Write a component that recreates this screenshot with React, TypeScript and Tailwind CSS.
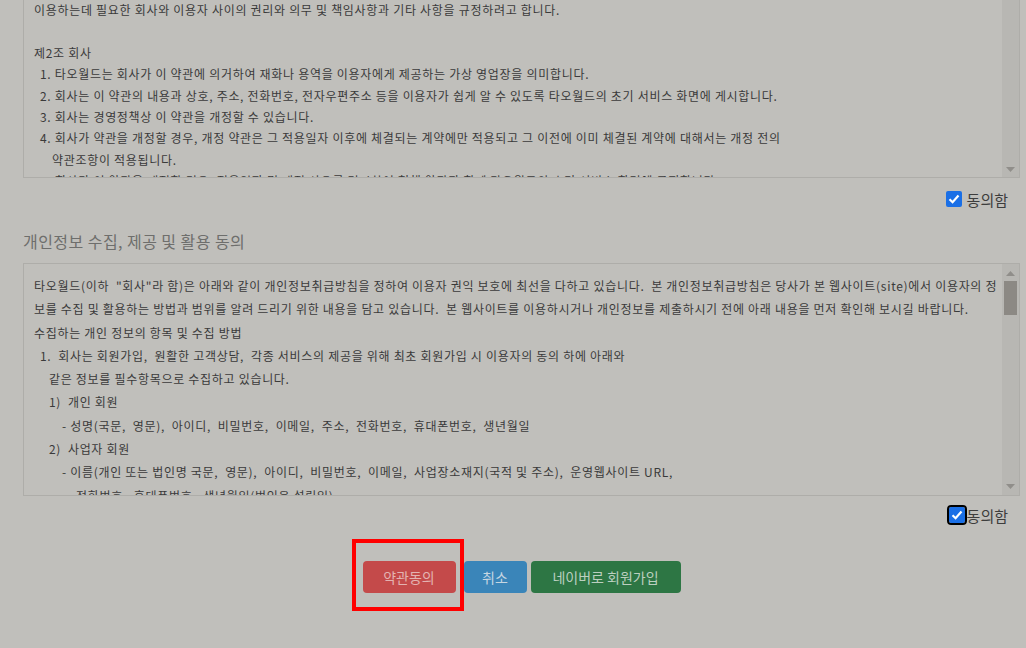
import React from "react";

const font = { fontFamily: '"Noto Sans CJK KR", "Noto Sans", sans-serif' };

const terms: { text: string; indent: string }[] = [
  { text: "이용하는데 필요한 회사와 이용자 사이의 권리와 의무 및 책임사항과 기타 사항을 규정하려고 합니다.", indent: "pl-0" },
  { text: "\u00a0", indent: "pl-0" },
  { text: "제2조 회사", indent: "pl-0" },
  { text: "1. 타오월드는 회사가 이 약관에 의거하여 재화나 용역을 이용자에게 제공하는 가상 영업장을 의미합니다.", indent: "pl-[6px]" },
  { text: "2. 회사는 이 약관의 내용과 상호, 주소, 전화번호, 전자우편주소 등을 이용자가 쉽게 알 수 있도록 타오월드의 초기 서비스 화면에 게시합니다.", indent: "pl-[6px]" },
  { text: "3. 회사는 경영정책상 이 약관을 개정할 수 있습니다.", indent: "pl-[6px]" },
  { text: "4. 회사가 약관을 개정할 경우, 개정 약관은 그 적용일자 이후에 체결되는 계약에만 적용되고 그 이전에 이미 체결된 계약에 대해서는 개정 전의", indent: "pl-[6px]" },
  { text: "약관조항이 적용됩니다.", indent: "pl-[18px]" },
  { text: "5. 회사가 이 약관을 개정할 경우, 적용일자 및 개정 사유를 명시하여 현행 약관과 함께 타오월드의 초기 서비스 화면에 공지합니다.", indent: "pl-[6px]" },
];

const privacy: { text: string; indent: string }[] = [
  { text: "타오월드(이하 \u00a0\"회사\"라 함)은 아래와 같이 개인정보취급방침을 정하여 이용자 권익 보호에 최선을 다하고 있습니다. \u00a0본 개인정보취급방침은 당사가 본 웹사이트(site)에서 이용자의 정", indent: "pl-0" },
  { text: "보를 수집 및 활용하는 방법과 범위를 알려 드리기 위한 내용을 담고 있습니다. \u00a0본 웹사이트를 이용하시거나 개인정보를 제출하시기 전에 아래 내용을 먼저 확인해 보시길 바랍니다.", indent: "pl-0" },
  { text: "수집하는 개인 정보의 항목 및 수집 방법", indent: "pl-0" },
  { text: "1. \u00a0회사는 회원가입, \u00a0원활한 고객상담, \u00a0각종 서비스의 제공을 위해 최초 회원가입 시 이용자의 동의 하에 아래와", indent: "pl-[6px]" },
  { text: "같은 정보를 필수항목으로 수집하고 있습니다.", indent: "pl-[15px]" },
  { text: "1) \u00a0개인 회원", indent: "pl-[15px]" },
  { text: "- 성명(국문, \u00a0영문), \u00a0아이디, \u00a0비밀번호, \u00a0이메일, \u00a0주소, \u00a0전화번호, \u00a0휴대폰번호, \u00a0생년월일", indent: "pl-[28px]" },
  { text: "2) \u00a0사업자 회원", indent: "pl-[15px]" },
  { text: "- 이름(개인 또는 법인명 국문, \u00a0영문), \u00a0아이디, \u00a0비밀번호, \u00a0이메일, \u00a0사업장소재지(국적 및 주소), \u00a0운영웹사이트 URL,", indent: "pl-[28px]" },
  { text: "전화번호, \u00a0휴대폰번호, \u00a0생년월일(법인은 설립일)", indent: "pl-[42px]" },
];

function Arrow({ up }: { up?: boolean }) {
  return (
    <svg width="9" height="5" viewBox="0 0 9 5">
      <path d={up ? "M0 5 L4.5 0 L9 5 Z" : "M0 0 L4.5 5 L9 0 Z"} fill="#908e8a" />
    </svg>
  );
}

function Agree({ focused }: { focused?: boolean }) {
  return (
    <div className="flex justify-end items-center pr-[12px] h-[16px]">
      <span
        className={`flex items-center justify-center w-[16px] h-[16px] rounded-[2px] bg-[#1a6fe6] ${
          focused ? "outline-2 outline-black ring-2 ring-white" : ""
        }`}
      >
        <svg width="12" height="10" viewBox="0 0 12 10">
          <path d="M1.5 5.2 L4.6 8.2 L10.5 1.6" stroke="#fff" strokeWidth="2.2" fill="none" />
        </svg>
      </span>
      <span className={`text-[15px] text-[#3d3d3d] leading-none ${focused ? "ml-[2px]" : "ml-[5px]"}`}>동의함</span>
    </div>
  );
}

export default function App() {
  return (
    <div className="min-h-screen bg-[#c0bfbb] pl-[23px] pr-[6px] overflow-hidden" style={font}>
      {/* 이용약관 */}
      <div className="flex h-[178px] border border-t-0 border-[#aeada9]">
        <div className="flex-1 overflow-hidden pl-[10px] -mt-[1px] text-[12px] leading-[21.4px] tracking-[0.7px] text-[#3a3a3a] whitespace-nowrap">
          {terms.map((l, i) => (
            <div key={i} className={l.indent}>{l.text}</div>
          ))}
        </div>
        <div className="w-[17px] bg-[#b8b7b3] flex flex-col justify-end items-center pb-[5px]">
          <Arrow />
        </div>
      </div>

      <div className="mt-[13px]">
        <Agree />
      </div>

      <h3 className="mt-[23px] text-[16px] leading-[22px] tracking-[0.45px] text-[#6e6e6c]">개인정보 수집, 제공 및 활용 동의</h3>

      {/* 개인정보 */}
      <div className="mt-[11px] flex h-[233px] border border-[#aeada9]">
        <div className="flex-1 overflow-hidden pl-[10px] pt-[10px] text-[12px] leading-[23.3px] tracking-[0.7px] text-[#3a3a3a] whitespace-nowrap">
          {privacy.map((l, i) => (
            <div key={i} className={l.indent}>{l.text}</div>
          ))}
        </div>
        <div className="w-[17px] bg-[#b8b7b3] flex flex-col items-center pt-[7px] pb-[6px]">
          <Arrow up />
          <div className="mt-[5px] w-[13px] h-[34px] bg-[#8c8984]" />
          <div className="flex-1" />
          <Arrow />
        </div>
      </div>

      <div className="mt-[11px]">
        <Agree focused />
      </div>

      <div className="mt-[38px] flex justify-center text-[14px]">
        <div className="relative">
          <button className="w-[93px] h-[32px] rounded-[4px] bg-[#c44a4a] text-[#e3b3b1]">약관동의</button>
          <span className="absolute -left-[11px] -top-[22px] -right-[8px] -bottom-[18px] border-4 border-[#ff0000] pointer-events-none" />
        </div>
        <button className="ml-[8px] w-[63px] h-[32px] rounded-[4px] bg-[#3a85b9] text-[#c6d6e2]">취소</button>
        <button className="ml-[4px] w-[150px] h-[32px] rounded-[4px] bg-[#2d7644] text-[#bccfc0]">네이버로 회원가입</button>
      </div>
    </div>
  );
}
